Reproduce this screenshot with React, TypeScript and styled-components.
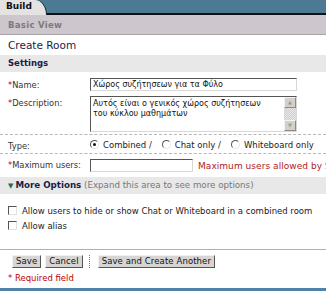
import React from "react";
import styled, { createGlobalStyle } from "styled-components";

const Global = createGlobalStyle`
  html, body { margin: 0; padding: 0; background: #ffffff; }
  body { width: 326px; height: 291px; overflow: hidden; font-family: "DejaVu Sans", Verdana, sans-serif; }
`;

const Page = styled.div`
  position: relative;
  width: 326px;
  height: 291px;
  display: flex;
  flex-direction: column;
  color: #222;
  font-size: 8px;
  overflow: hidden;
`;

const TabBar = styled.div`
  height: 13px;
  background: #4c7a95;
  border-bottom: 2px solid #111;
  display: flex;
`;

const Tab = styled.div`
  width: 40px;
  height: 15px;
  padding-left: 6px;
  background: #e4e2e2;
  border-top-right-radius: 11px 15px;
  box-shadow: 1px 0 0 #1c2c36;
  font-weight: bold;
  font-size: 9px;
  line-height: 13px;
  color: #111;
`;

const SubBar = styled.div`
  height: 19px;
  background: #cdc6cc;
  border-bottom: 1px solid #a9a6a8;
  padding-left: 8px;
  font-size: 8.5px;
  font-weight: bold;
  color: #7b7a7c;
  line-height: 21px;
  letter-spacing: 0.3px;
`;

const Title = styled.div`
  height: 20px;
  padding-left: 8px;
  font-size: 10.5px;
  line-height: 20px;
  color: #1a1d4a;
`;

const SectionBar = styled.div`
  height: 17px;
  background: #e8e8e8;
  padding-left: 8px;
  font-size: 8.5px;
  line-height: 17px;
  color: #1a1d4a;
  font-weight: bold;
`;

const Form = styled.div`
  display: flex;
  flex-direction: column;
`;

const Row = styled.div<{ $h: number; $top?: number; $dashed?: boolean }>`
  display: flex;
  align-items: flex-start;
  height: ${(p) => p.$h}px;
  padding-top: ${(p) => p.$top ?? 0}px;
  border-bottom: ${(p) => (p.$dashed ? "1px dashed #b8b8b8" : "none")};
`;

const Label = styled.div<{ $top?: number }>`
  flex: 0 0 82px;
  padding-left: 8px;
  padding-top: ${(p) => p.$top ?? 0}px;
  font-size: 8.3px;
  color: #333;
  white-space: nowrap;
`;

const Req = styled.span`
  color: #c00000;
`;

const Field = styled.div<{ $w: number; $h: number; $mt?: number }>`
  flex: 0 0 ${(p) => p.$w}px;
  height: ${(p) => p.$h}px;
  margin-top: ${(p) => p.$mt ?? 0}px;
  box-sizing: border-box;
  border-top: 1px solid #555;
  border-left: 1px solid #555;
  border-right: 1px solid #d8d8d8;
  border-bottom: 1px solid #d8d8d8;
  background: #fff;
  font-size: 8px;
  line-height: 10px;
  padding: 1px 2px;
  color: #111;
  display: flex;
`;

const AreaText = styled.div`
  flex: 1;
  padding-top: 1px;
`;

const Scroll = styled.div`
  width: 12px;
  display: flex;
  flex-direction: column;
  margin: -1px -2px -1px 0;
  background: repeating-conic-gradient(#e6e6e6 0 25%, #cfcfcf 0 50%) 0 0 / 2px 2px;
`;

const ScrollBtn = styled.div`
  height: 11px;
  background: #d4d0c8;
  border: 1px solid;
  border-color: #f4f4f4 #8a8a8a #8a8a8a #f4f4f4;
  box-sizing: border-box;
  font-size: 5px;
  line-height: 9px;
  text-align: center;
  color: #9a9a9a;
`;

const ScrollGap = styled.div`
  flex: 1;
`;

const Radios = styled.div`
  display: flex;
  align-items: center;
  gap: 10px;
  padding-top: 5px;
  font-size: 8.5px;
  color: #222;
`;

const RadioDot = styled.span<{ $on?: boolean }>`
  display: inline-block;
  width: 9px;
  height: 9px;
  border-radius: 50%;
  box-sizing: border-box;
  border: 1px solid;
  border-color: #555 #e8e8e8 #e8e8e8 #555;
  background: #fff;
  margin-right: 4px;
  vertical-align: -1px;
  position: relative;
  &::after {
    content: "";
    display: ${(p) => (p.$on ? "block" : "none")};
    position: absolute;
    left: 2px;
    top: 2px;
    width: 3px;
    height: 3px;
    border-radius: 50%;
    background: #111;
  }
`;

const Hint = styled.div`
  flex: 0 0 auto;
  padding-left: 5px;
  padding-top: 2px;
  color: #b22222;
  font-size: 9px;
  letter-spacing: 0.05px;
  white-space: nowrap;
`;

const OptionBar = styled.div`
  height: 17px;
  margin-top: 5px;
  background: #e8e8e8;
  padding-left: 8px;
  font-size: 8.7px;
  line-height: 17px;
  color: #777;
  white-space: nowrap;
`;

const OptionTitle = styled.span`
  color: #1a1d4a;
  font-weight: bold;
`;

const Arrow = styled.span`
  color: #2c6b4e;
  font-size: 7px;
  margin-right: 2px;
`;

const Checks = styled.div`
  display: flex;
  flex-direction: column;
  gap: 4px;
  padding: 11px 0 0 8px;
  font-size: 8.5px;
  color: #222;
`;

const CheckRow = styled.div`
  display: flex;
  align-items: center;
  white-space: nowrap;
  height: 11px;
`;

const Box = styled.span`
  width: 9px;
  height: 9px;
  box-sizing: border-box;
  border: 1px solid;
  border-color: #555 #e0e0e0 #e0e0e0 #555;
  background: #fff;
  margin-right: 5px;
`;

const Divider = styled.div`
  margin-top: 18px;
  border-top: 1px solid #b0b0b0;
`;

const Buttons = styled.div`
  display: flex;
  align-items: center;
  gap: 4px;
  padding: 5px 0 0 12px;
`;

const Button = styled.div`
  height: 13px;
  box-sizing: border-box;
  padding: 0 3px;
  background: #d8d6d4;
  border: 1px solid;
  border-color: #f2f2f2 #555 #555 #f2f2f2;
  font-size: 8.5px;
  line-height: 11px;
  color: #111;
  letter-spacing: 0.1px;
`;

const Sep = styled.div`
  width: 0;
  height: 13px;
  border-left: 1px dotted #777;
  margin: 0 4px 0 2px;
`;

const Required = styled.div`
  padding: 5px 0 0 8px;
  font-size: 8.5px;
  color: #c00000;
`;

const Footer = styled.div`
  position: absolute;
  left: 0;
  right: 0;
  bottom: 0;
  height: 3px;
  background: #4f81aa;
`;

export default function App() {
  return (
    <Page>
      <Global />
      <TabBar>
        <Tab>Build</Tab>
      </TabBar>
      <SubBar>Basic View</SubBar>
      <Title>Create Room</Title>
      <SectionBar>Settings</SectionBar>
      <Form>
        <Row $h={16} $top={6}>
          <Label $top={2}>
            <Req>*</Req>Name:
          </Label>
          <Field $w={207} $h={13}>Χώρος συζήτησεων για τα Φύλο</Field>
        </Row>
        <Row $h={40} $dashed>
          <Label $top={4}>
            <Req>*</Req>Description:
          </Label>
          <Field $w={207} $h={36} $mt={2}>
            <AreaText>
              Αυτός είναι ο γενικός χώρος συζήτησεων
              <br />
              του κύκλου μαθημάτων
            </AreaText>
            <Scroll>
              <ScrollBtn>▲</ScrollBtn>
              <ScrollGap />
              <ScrollBtn>▼</ScrollBtn>
            </Scroll>
          </Field>
        </Row>
        <Row $h={18} $dashed>
          <Label $top={6}>Type:</Label>
          <Radios>
            <span>
              <RadioDot $on />
              Combined /
            </span>
            <span>
              <RadioDot />
              Chat only /
            </span>
            <span>
              <RadioDot />
              Whiteboard only
            </span>
          </Radios>
        </Row>
        <Row $h={13} $top={5}>
          <Label $top={1}>
            <Req>*</Req>Maximum users:
          </Label>
          <Field $w={103} $h={13} />
          <Hint>Maximum users allowed by Server</Hint>
        </Row>
      </Form>
      <OptionBar>
        <Arrow>▼</Arrow>
        <OptionTitle>More Options</OptionTitle> (Expand this area to see more options)
      </OptionBar>
      <Checks>
        <CheckRow>
          <Box />
          Allow users to hide or show Chat or Whiteboard in a combined room
        </CheckRow>
        <CheckRow>
          <Box />
          Allow alias
        </CheckRow>
      </Checks>
      <Divider />
      <Buttons>
        <Button>Save</Button>
        <Button>Cancel</Button>
        <Sep />
        <Button>Save and Create Another</Button>
      </Buttons>
      <Required>* Required field</Required>
      <Footer />
    </Page>
  );
}
